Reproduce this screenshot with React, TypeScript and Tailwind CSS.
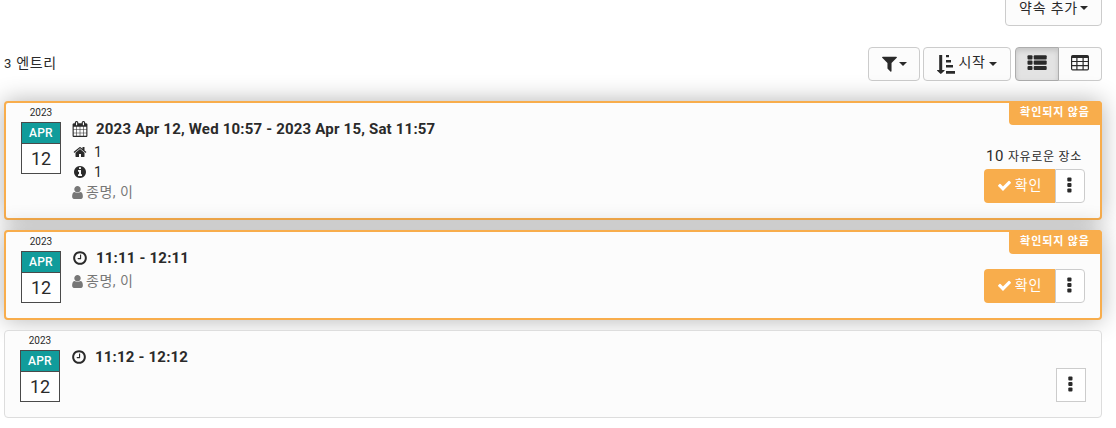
import React from 'react';

const PATHS = {
  calendar:
    'M192 1664h288v-288h-288v288zm352 0h320v-288h-320v288zm-352-352h288v-320h-288v320zm352 0h320v-320h-320v320zm-352-384h288v-288h-288v288zm736 736h320v-288h-320v288zm-384-736h320v-288h-320v288zm768 736h288v-288h-288v288zm-384-352h320v-320h-320v320zm-352-864v-288q0-13-9.5-22.5t-22.5-9.5h-64q-13 0-22.5 9.5t-9.5 22.5v288q0 13 9.5 22.5t22.5 9.5h64q13 0 22.5-9.5t9.5-22.5zm736 864h288v-320h-288v320zm-384-384h320v-288h-320v288zm384 0h288v-288h-288v288zm32-480v-288q0-13-9.5-22.5t-22.5-9.5h-64q-13 0-22.5 9.5t-9.5 22.5v288q0 13 9.5 22.5t22.5 9.5h64q13 0 22.5-9.5t9.5-22.5zm384-64v1280q0 52-38 90t-90 38h-1408q-52 0-90-38t-38-90v-1280q0-52 38-90t90-38h128v-96q0-66 47-113t113-47h64q66 0 113 47t47 113v96h384v-96q0-66 47-113t113-47h64q66 0 113 47t47 113v96h128q52 0 90 38t38 90z',
  clock:
    'M1024 544v448q0 14-9 23t-23 9h-320q-14 0-23-9t-9-23v-64q0-14 9-23t23-9h224v-352q0-14 9-23t23-9h64q14 0 23 9t9 23zm416 352q0-148-73-273t-198-198-273-73-273 73-198 198-73 273 73 273 198 198 273 73 273-73 198-198 73-273zm224 0q0 209-103 385.5t-279.5 279.5-385.5 103-385.5-103-279.5-279.5-103-385.5 103-385.5 279.5-279.5 385.5-103 385.5 103 279.5 279.5 103 385.5z',
  home: 'M1472 992v480q0 26-19 45t-45 19h-384v-384h-256v384h-384q-26 0-45-19t-19-45v-480q0-1 .5-3t.5-3l575-474 575 474q1 2 1 6zm223-69l-62 74q-8 9-21 11h-3q-13 0-21-7l-692-577-692 577q-12 8-24 7-13-2-21-11l-62-74q-8-10-7-23.5t11-21.5l719-599q32-26 76-26t76 26l244 204v-195q0-14 9-23t23-9h192q14 0 23 9t9 23v408l219 182q10 8 11 21.5t-7 23.5z',
  info: 'M1152 1376v-160q0-14-9-23t-23-9h-96v-512q0-14-9-23t-23-9h-320q-14 0-23 9t-9 23v160q0 14 9 23t23 9h96v320h-96q-14 0-23 9t-9 23v160q0 14 9 23t23 9h448q14 0 23-9t9-23zm-128-896v-160q0-14-9-23t-23-9h-192q-14 0-23 9t-9 23v160q0 14 9 23t23 9h192q14 0 23-9t9-23zm640 416q0 209-103 385.5t-279.5 279.5-385.5 103-385.5-103-279.5-279.5-103-385.5 103-385.5 279.5-279.5 385.5-103 385.5 103 279.5 279.5 103 385.5z',
  user: 'M1536 1399q0 109-62.5 187t-150.5 78h-854q-88 0-150.5-78t-62.5-187q0-85 8.5-160.5t31.5-152 58.5-131 94-89 134.5-34.5q131 128 313 128t313-128q76 0 134.5 34.5t94 89 58.5 131 31.5 152 8.5 160.5zm-256-887q0 159-112.5 271.5t-271.5 112.5-271.5-112.5-112.5-271.5 112.5-271.5 271.5-112.5 271.5 112.5 112.5 271.5z',
  filter:
    'M1595 295q17 41-14 70l-493 493v742q0 42-39 59-13 5-25 5-27 0-45-19l-256-256q-19-19-19-45v-486l-493-493q-31-29-14-70 17-39 59-39h1280q42 0 59 39z',
  check:
    'M1671 566q0 40-28 68l-724 724-136 136q-28 28-68 28t-68-28l-136-136-362-362q-28-28-28-68t28-68l136-136q28-28 68-28t68 28l294 295 656-657q28-28 68-28t68 28l136 136q28 28 28 68z',
};

function Icon({ name, className }: { name: keyof typeof PATHS; className: string }) {
  return (
    <svg viewBox="0 0 1792 1792" fill="currentColor" className={`shrink-0 overflow-visible ${className}`}>
      <path d={PATHS[name]} />
    </svg>
  );
}

function Caret({ className = '' }: { className?: string }) {
  return (
    <svg viewBox="0 0 8 4" fill="currentColor" className={`h-1 w-2 shrink-0 ${className}`}>
      <path d="M0 0h8L4 4z" />
    </svg>
  );
}

function SortIcon() {
  return (
    <svg viewBox="0 0 18 19" fill="currentColor" className="h-[19px] w-[18px] shrink-0">
      <path d="M2.2 0h3v15h2.2q.5.3.1.8l-3.3 3q-.4.3-.8 0l-3.2-3q-.4-.5.1-.8h1.9z" />
      <path d="M9 0h3v2.2H9zM9 5h5v2.4H9zM9 10h7v2.5H9zM9 16h9v2.8H9z" />
    </svg>
  );
}

function ListIcon() {
  return (
    <svg viewBox="0 0 20 16" fill="currentColor" className="h-4 w-5 shrink-0">
      {[0.3, 5.6, 10.9].map((y) => (
        <g key={y}>
          <rect x="0.5" y={y} width="5" height="4.2" rx="1" />
          <rect x="6.7" y={y} width="13" height="4.2" rx="1" />
        </g>
      ))}
    </svg>
  );
}

function TableIcon() {
  return (
    <svg viewBox="0 0 18 16" fill="currentColor" className="h-4 w-[18px] shrink-0">
      <path
        fillRule="evenodd"
        d="M1.7 0h14.6q1.7 0 1.7 1.7v12.1q0 1.7-1.7 1.7H1.7q-1.7 0-1.7-1.7V1.7q0-1.7 1.7-1.7zM1.2 3h4.1v3H1.2zM6.5 3h5v3h-5zM12.7 3h4.1v3h-4.1zM1.2 7.1h4.1v3H1.2zM6.5 7.1h5v3h-5zM12.7 7.1h4.1v3h-4.1zM1.2 11.2h4.1v3H1.7q-.5 0-.5-.5zM6.5 11.2h5v3h-5zM12.7 11.2h4.1v2.5q0 .5-.5.5h-3.6z"
      />
    </svg>
  );
}

function Dots() {
  return (
    <svg viewBox="0 0 5 16" fill="currentColor" className="h-4 w-[5px] shrink-0">
      {[0.5, 6, 11.5].map((y) => (
        <rect key={y} x="0.3" y={y} width="4.2" height="4" rx="1" />
      ))}
    </svg>
  );
}

function DateBadge() {
  return (
    <div className="flex w-10 shrink-0 flex-col">
      <span className="h-[19px] text-center text-[10px] leading-[19px] tracking-normal">2023</span>
      <div className="flex h-[52px] flex-col border border-[#4a4a4a] bg-white text-center">
        <span className="h-[21px] border-b border-[#4a4a4a] bg-[#119c9b] text-[12px] font-medium leading-[20px] tracking-[0.2px] text-white">
          APR
        </span>
        <span className="text-[18px] leading-[30px] tracking-normal">12</span>
      </div>
    </div>
  );
}

function Person() {
  return (
    <div className="flex h-5 items-center text-[14px] tracking-[0.5px] text-[#777]">
      <Icon name="user" className="-ml-[3px] size-[15px]" />
      <span className="ml-px">종명, 이</span>
    </div>
  );
}

function Unconfirmed() {
  return (
    <span className="absolute -right-[2px] -top-[2px] flex h-6 w-[93px] items-center justify-center rounded-bl-[4px] rounded-tr-[4px] bg-[#f8ad4c] pr-px text-[11px] font-bold tracking-[0.9px] text-white">
      확인되지 않음
    </span>
  );
}

function ConfirmGroup() {
  return (
    <div className="flex h-[34px]">
      <button className="flex w-[71px] items-center justify-center rounded-l-[4px] bg-[#f8ad4c] pb-[2px] text-[14px] tracking-[0.8px] text-white">
        <Icon name="check" className="size-[15px]" />
        <span className="ml-[3px]">확인</span>
      </button>
      <button className="flex w-[30px] items-center justify-center rounded-r-[4px] border border-[#ccc] bg-white pb-[3px] pr-[2px]">
        <Dots />
      </button>
    </div>
  );
}

const pendingCard =
  'relative flex rounded-[4px] border-2 border-[#f8ad4c] bg-[#fcfcfc] pl-[15px] shadow-[0_0_25px_rgba(0,0,0,0.3)]';

export default function App() {
  return (
    <div className="h-[428px] w-[1116px] overflow-hidden bg-white pl-1 pr-[14px] font-['Roboto','Noto_Sans_CJK_KR',sans-serif] text-[14px] tracking-[0.2px] text-[#2a2a2a]">
      <div className="flex h-[26px] items-end justify-end">
        <button className="flex h-[34px] w-[97px] shrink-0 items-center justify-center rounded-[4px] border border-[#ccc] bg-[#fcfcfc] pb-[2px] tracking-[0.8px]">
          <span>약속 추가</span>
          <Caret className="ml-[2px]" />
        </button>
      </div>

      <div className="mt-[21px] flex h-[34px] justify-between">
        <span className="h-[32px] text-[14px] leading-[32px] tracking-[0.7px]">
          <span className="text-[13px]">3</span> <span>엔트리</span>
        </span>
        <div className="flex">
          <button className="flex w-[52px] items-center justify-center rounded-[4px] border border-[#ccc] bg-[#fcfcfc] pr-[2px]">
            <Icon name="filter" className="mb-[2px] size-[19px]" />
            <Caret />
          </button>
          <button className="ml-[3px] flex w-[88px] items-center justify-center rounded-[4px] border border-[#ccc] bg-[#fcfcfc] tracking-[0.6px]">
            <SortIcon />
            <span className="ml-[4px] pb-[3px]">시작</span>
            <Caret className="ml-1" />
          </button>
          <button className="ml-1 flex w-11 items-center justify-center rounded-l-[4px] border border-[#adadad] bg-[#e3e3e3] pb-[3px] shadow-[inset_0_3px_5px_rgba(0,0,0,0.125)]">
            <ListIcon />
          </button>
          <button className="flex w-[43px] items-center justify-center rounded-r-[4px] border border-l-0 border-[#ccc] bg-[#fcfcfc] pb-[3px]">
            <TableIcon />
          </button>
        </div>
      </div>

      <div className="mt-5 flex flex-col">
        <article className={`${pendingCard} h-[119px]`}>
          <DateBadge />
          <div className="ml-[12px] flex flex-col pt-[16px]">
            <div className="flex h-[20px] items-center text-[15px] font-bold tracking-[0.19px]">
              <Icon name="calendar" className="-ml-px size-[16px]" />
              <span className="ml-[8px]">2023 Apr 12, Wed 10:57 - 2023 Apr 15, Sat 11:57</span>
            </div>
            <div className="mt-[3px] flex h-5 items-center">
              <Icon name="home" className="size-[14px]" />
              <span className="ml-[7px]">1</span>
            </div>
            <div className="flex h-5 items-center">
              <Icon name="info" className="size-[14px]" />
              <span className="ml-[7px]">1</span>
            </div>
            <Person />
          </div>
          <div className="ml-auto mr-[15px] flex flex-col items-end pt-[44px]">
            <span className="mr-[3px] h-[22px] text-[12px] leading-[19px] tracking-[0.7px]">
              <span className="text-[15px]">10</span> <span>자유로운 장소</span>
            </span>
            <ConfirmGroup />
          </div>
          <Unconfirmed />
        </article>

        <article className={`${pendingCard} mt-[10px] h-[90px]`}>
          <DateBadge />
          <div className="ml-[12px] flex flex-col pt-[16px]">
            <div className="flex h-[20px] items-center text-[15px] font-bold tracking-[0.19px]">
              <Icon name="clock" className="-ml-px size-[16px]" />
              <span className="ml-[8px]">11:11 - 12:11</span>
            </div>
            <div className="mt-[3px]">
              <Person />
            </div>
          </div>
          <div className="ml-auto mr-[15px] pt-[37px]">
            <ConfirmGroup />
          </div>
          <Unconfirmed />
        </article>

        <article className="relative mt-[10px] flex h-[88px] rounded-[4px] border border-[#ddd] bg-[#fcfcfc] pl-[15px]">
          <DateBadge />
          <div className="ml-[12px] pt-[16px]">
            <div className="flex h-[20px] items-center text-[15px] font-bold tracking-[0.19px]">
              <Icon name="clock" className="-ml-px size-[16px]" />
              <span className="ml-[8px]">11:12 - 12:12</span>
            </div>
          </div>
          <button className="ml-auto mr-[15px] mt-[37px] flex h-[34px] w-[30px] items-center justify-center border border-[#ccc] bg-white pb-[3px] pr-px">
            <Dots />
          </button>
        </article>
      </div>
    </div>
  );
}
